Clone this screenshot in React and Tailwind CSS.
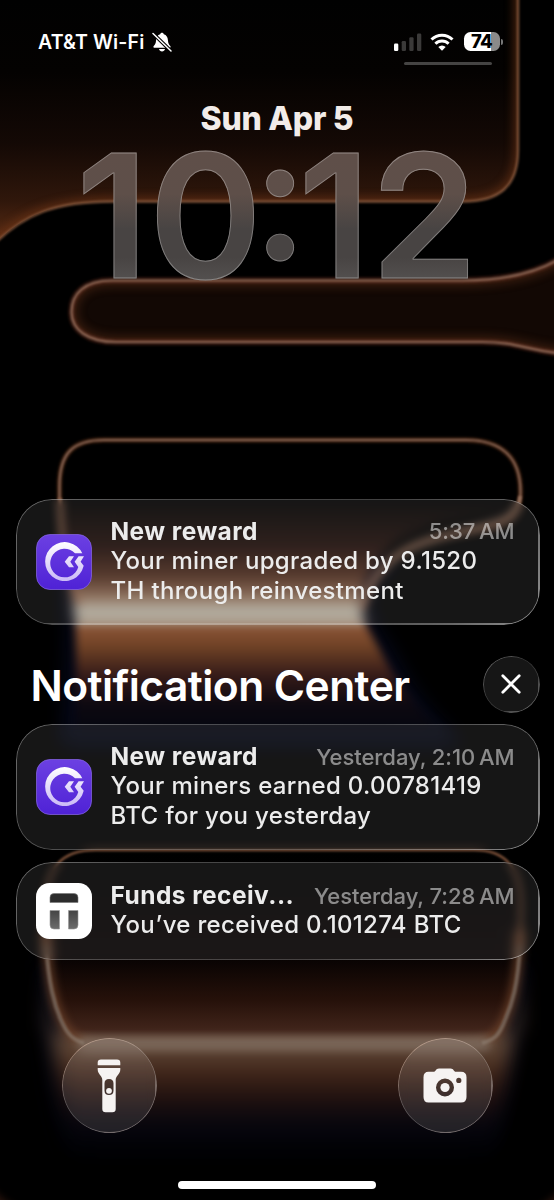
import React from "react";

const EDGE =
  "M518 -10 V150 C518 186 500 201.500 462 201.500 H112 C55 201.500 24 214 -8 246";
const CAPSULE =
  "M564 256 C540 272 506 280.500 462 280.500 H112 C84 280.500 71.500 294 71.500 312 C71.500 330 88 342 116 342 H482 C518 342 524 350 564 354";
const LOOP =
  "M59.500 500 V486 C59.500 452 74 440 104 440 H466 C502 440 520.500 458 520.500 492 C520.500 540 470 520 410 548 C378 564 368 590 362 610";
const BASE =
  "M45 912 C45 866 62 850 96 850 H474 C506 850 521 868 521 906 C521 950 517 985 507 1012 C499 1034 488 1043 464 1043 H102 C78 1043 66 1034 59 1012 C49 985 45 950 45 912 Z";

function Blur({ id, amount }) {
  return (
    <filter id={id} filterUnits="userSpaceOnUse" colorInterpolationFilters="sRGB" x="-60" y="-60" width="680" height="1320">
      <feGaussianBlur stdDeviation={amount} />
    </filter>
  );
}

function Wallpaper() {
  return (
    <svg className="absolute inset-0 size-full" viewBox="0 0 554 1200" aria-hidden="true">
      <defs>
        <Blur id="b2" amount="0.9" />
        <Blur id="b5" amount="4" />
        <Blur id="b9" amount="9" />
        <linearGradient id="top" gradientUnits="userSpaceOnUse" x1="0" y1="0" x2="0" y2="240">
          <stop offset="0" stopColor="#010101" />
          <stop offset="0.3" stopColor="#040201" />
          <stop offset="0.6" stopColor="#140905" />
          <stop offset="0.84" stopColor="#30170b" />
          <stop offset="1" stopColor="#5a2c14" />
        </linearGradient>
        <linearGradient id="flare" gradientUnits="userSpaceOnUse" x1="0" y1="500" x2="0" y2="735">
          <stop offset="0" stopColor="#000" />
          <stop offset="0.2" stopColor="#1c0c08" />
          <stop offset="0.33" stopColor="#4a2a1c" />
          <stop offset="0.42" stopColor="#8a6a54" />
          <stop offset="0.46" stopColor="#aca698" />
          <stop offset="0.515" stopColor="#aca698" />
          <stop offset="0.54" stopColor="#8a5436" />
          <stop offset="0.62" stopColor="#714326" />
          <stop offset="0.75" stopColor="#341a18" />
          <stop offset="0.87" stopColor="#0d0911" />
          <stop offset="1" stopColor="#04060f" />
        </linearGradient>
        <linearGradient id="pool" gradientUnits="userSpaceOnUse" x1="0" y1="850" x2="0" y2="1043">
          <stop offset="0" stopColor="#000" />
          <stop offset="0.55" stopColor="#060202" />
          <stop offset="0.78" stopColor="#26110a" />
          <stop offset="0.93" stopColor="#40241a" />
          <stop offset="1" stopColor="#5e493c" />
        </linearGradient>
        <linearGradient id="below" gradientUnits="userSpaceOnUse" x1="0" y1="1030" x2="0" y2="1165">
          <stop offset="0" stopColor="#62493a" />
          <stop offset="0.16" stopColor="#5a4232" />
          <stop offset="0.3" stopColor="#42271a" />
          <stop offset="0.5" stopColor="#21110f" />
          <stop offset="0.68" stopColor="#09070f" />
          <stop offset="0.85" stopColor="#020309" stopOpacity="0.6" />
          <stop offset="1" stopColor="#000" stopOpacity="0" />
        </linearGradient>
        <linearGradient id="navy" gradientUnits="userSpaceOnUse" x1="0" y1="960" x2="0" y2="1165">
          <stop offset="0" stopColor="#080d26" stopOpacity="0.45" />
          <stop offset="0.6" stopColor="#080d26" stopOpacity="0.4" />
          <stop offset="1" stopColor="#080d26" stopOpacity="0" />
        </linearGradient>
        <clipPath id="topClip"><path d={EDGE + " V-10 Z"} /></clipPath>
        <clipPath id="capClip"><path d={CAPSULE + " Z"} /></clipPath>
      </defs>
      <rect width="554" height="1200" fill="#000" />

      <g clipPath="url(#topClip)">
        <rect x="-10" y="-10" width="540" height="260" fill="url(#top)" />
        <path d={EDGE} fill="none" stroke="#7a3a18" strokeWidth="10" opacity="0.5" filter="url(#b5)" />
      </g>
      <path d={EDGE} fill="none" stroke="#7e5238" strokeWidth="2.400" filter="url(#b2)" />

      <path d={CAPSULE} fill="#120804" />
      <g clipPath="url(#capClip)">
        <path d={CAPSULE} fill="none" stroke="#5a2f18" strokeWidth="14" opacity="0.45" filter="url(#b5)" />
      </g>
      <path d={CAPSULE} fill="none" stroke="#5c2a1c" strokeWidth="7" opacity="0.45" filter="url(#b2)" />
      <path d={CAPSULE} fill="none" stroke="#916a58" strokeWidth="2.200" filter="url(#b2)" />

      <path
        d="M66 560 C64 580 66 590 66 620 C66 660 62 700 62 745 H462 C442 720 418 700 400 662 C385 634 376 628 366 605 C372 590 380 570 400 560 Z"
        fill="#0a1030"
        opacity="0.5"
        filter="url(#b9)"
      />
      <path
        d="M60 500 C62 550 72 585 75 620 C77 650 76 700 74 735 H448 C425 715 400 690 380 650 C368 628 360 618 362 602 C368 560 392 535 440 522 C490 512 518 512 520 500 Z"
        fill="url(#flare)"
        filter="url(#b5)"
      />
      <path d={LOOP} fill="none" stroke="#5c3018" strokeWidth="6" opacity="0.5" filter="url(#b2)" />
      <path d={LOOP} fill="none" stroke="#8d6856" strokeWidth="2.200" filter="url(#b2)" />
      <path d="M410 548 C378 564 368 590 362 610 M520 496 C518 530 470 522 410 548" fill="none" stroke="#a07a64" strokeWidth="4" opacity="0.7" filter="url(#b2)" />
      <path d="M60 498 C61 545 66 575 80 604" fill="none" stroke="#8d6048" strokeWidth="4" filter="url(#b2)" />

      <path d="M40 960 C42 1020 46 1080 62 1165 H498 C512 1080 522 1020 528 960 Z" fill="url(#navy)" filter="url(#b9)" />
      <path d="M46 960 C48 1010 54 1080 78 1165 H488 C508 1080 519 1010 521 960 V1030 H46 Z" fill="url(#below)" filter="url(#b9)" />
      <path d={BASE} fill="url(#pool)" />
      <path d="M46 930 C47 970 52 1000 61 1020 C68 1036 78 1043 100 1043 H466 C488 1043 499 1036 505 1020 C514 1000 519 970 520 930" fill="none" stroke="#7a4a2e" strokeWidth="9" opacity="0.7" filter="url(#b5)" />
      <path d="M84 1044 H484" stroke="#80746a" strokeWidth="14" strokeLinecap="round" opacity="0.7" filter="url(#b5)" />
      <path d="M46 945 C49 985 54 1004 61 1020 C68 1036 74 1040 84 1043" fill="none" stroke="#8f8073" strokeWidth="4" opacity="0.6" filter="url(#b2)" />
      <path d="M482 1043 C494 1040 499 1036 505 1020 C512 1004 518 985 520 945" fill="none" stroke="#8f8073" strokeWidth="4" opacity="0.6" filter="url(#b2)" />
      <path d="M46 945 C45 930 45 920 45 912 C45 866 62 850 96 850 H474 C506 850 521 868 521 906 C521 925 520 935 520 945" fill="none" stroke="#7c5038" strokeWidth="2.500" filter="url(#b2)" />
      <path d="M-12 1186 C0 1198 10 1206 24 1212 H-12 Z M566 1186 C554 1198 544 1206 530 1212 H566 Z" fill="#4a2416" opacity="0.6" filter="url(#b5)" />
    </svg>
  );
}

function Rim({ className }) {
  return (
    <div
      className={
        "pointer-events-none absolute inset-0 p-[1.3px] [mask:linear-gradient(#fff_0_0)_content-box_exclude,linear-gradient(#fff_0_0)] " +
        className
      }
    />
  );
}

function MinerIcon({ id }) {
  return (
    <svg className="size-14 shrink-0" viewBox="0 0 56 56" aria-hidden="true">
      <defs>
        <linearGradient id={id + "bg"} x1="0" y1="0" x2="0" y2="1">
          <stop offset="0" stopColor="#6c40e2" />
          <stop offset="1" stopColor="#4f22d6" />
        </linearGradient>
        <linearGradient id={id + "fg"} gradientUnits="userSpaceOnUse" x1="0" y1="8" x2="0" y2="48">
          <stop offset="0" stopColor="#fff" />
          <stop offset="1" stopColor="#c9b8f6" />
        </linearGradient>
      </defs>
      <rect x="0.500" y="0.500" width="55" height="55" rx="13.500" fill={`url(#${id}bg)`} stroke="#8a68ea" strokeOpacity="0.7" />
      <path
        d="M46.300 19.300 A19.500 19.500 0 1 0 46 36.500 L47.700 31.800 L44.600 27.700 L48 22.300 H42.600 L38.600 27.700 L42.300 33 A14.300 14.300 0 1 1 39 19.300 Z"
        fill={`url(#${id}fg)`}
      />
      <path d="M33 22.300 H38 L34.300 27.700 L38 33.300 H33 L28.700 27.700 Z" fill={`url(#${id}fg)`} />
    </svg>
  );
}

function FundsIcon() {
  return (
    <svg className="size-14 shrink-0" viewBox="0 0 56 56" aria-hidden="true">
      <defs>
        <linearGradient id="leg" x1="0" y1="0" x2="0" y2="1">
          <stop offset="0" stopColor="#444" />
          <stop offset="1" stopColor="#6c6c6c" />
        </linearGradient>
      </defs>
      <rect width="56" height="56" rx="13.500" fill="#fff" />
      <path d="M18 10.500 H38 Q42 10.500 42 14.500 V19.500 H14 V14.500 Q14 10.500 18 10.500 Z" fill="#2c2c2c" stroke="#777" strokeWidth="0.600" />
      <path d="M14 27.500 H23.500 V46 H18 Q14 46 14 42 Z" fill="url(#leg)" stroke="#999" strokeWidth="0.600" />
      <path d="M32.500 27.500 H42 V42 Q42 46 38 46 H32.500 Z" fill="url(#leg)" stroke="#999" strokeWidth="0.600" />
    </svg>
  );
}

function Card({ icon, title, time, children, className }) {
  return (
    <article
      className={
        "relative flex items-center rounded-[36px] bg-white/[0.085] pr-[25px] pl-[20.500px] backdrop-blur-[4px] " + className
      }
    >
      <Rim className="rounded-[36px] bg-[linear-gradient(125deg,#ffffff60_0%,#ffffff38_25%,#ffffff30_60%,#ffffff58_85%,#ffffff88_100%)]" />
      {icon}
      <div className="ml-[18.500px] min-w-0 flex-1 pb-[2px]">
        <div className="flex h-[30px] items-center justify-between">
          <h3 className="text-[24.500px] leading-[30px] font-bold tracking-[0.45px] whitespace-nowrap text-[#ececec]">{title}</h3>
          <time className="pt-px text-[22px] leading-[30px] font-medium tracking-[-0.06px] whitespace-nowrap text-white/50">{time}</time>
        </div>
        <p className="text-[24px] leading-[29.600px] font-medium tracking-[0.33px] whitespace-nowrap text-[#ececec]">{children}</p>
      </div>
    </article>
  );
}

function StatusBar() {
  return (
    <header className="flex h-[68px] items-start justify-between pt-[29.500px] pr-[51.500px] pl-[38px]">
      <div className="flex items-center gap-[8px]">
        <span className="text-[19.500px] leading-6 font-semibold tracking-[0.15px] whitespace-nowrap">AT&amp;T Wi-Fi</span>
        <svg className="size-5" viewBox="0 0 20 20" aria-hidden="true">
          <path d="M10 0.800 C10.900 0.800 11.600 1.400 11.800 2.200 C14.500 3 15.700 5.200 15.900 8 C16.100 11.500 17 12.500 18.300 14 C18.900 14.800 18.500 15.800 17.400 15.800 H2.600 C1.500 15.800 1.100 14.800 1.700 14 C3 12.500 3.900 11.500 4.100 8 C4.300 5.200 5.500 3 8.200 2.200 C8.400 1.400 9.100 0.800 10 0.800 Z" fill="#fff" />
          <path d="M7 17 H13 C12.700 18.500 11.500 19.400 10 19.400 C8.500 19.400 7.300 18.500 7 17 Z" fill="#fff" />
          <path d="M0.500 1 L19.500 19.500" stroke="#030202" strokeWidth="3.600" />
          <path d="M1 1.500 L19 19" stroke="#fff" strokeWidth="1.500" strokeLinecap="round" />
        </svg>
      </div>
      <div className="flex flex-col items-center">
        <div className="flex h-6 items-center">
          <svg className="h-[18px] w-7" viewBox="0 0 28 18" aria-hidden="true">
            <rect x="0" y="10.500" width="4.300" height="7.500" rx="1.200" fill="#fff" />
            <rect x="7.700" y="8" width="4.300" height="10" rx="1.200" fill="#3b3a39" />
            <rect x="15.300" y="4.300" width="4.300" height="13.700" rx="1.200" fill="#3b3a39" />
            <rect x="23" y="0.500" width="4.300" height="17.500" rx="1.200" fill="#3b3a39" />
          </svg>
          <svg className="ml-[8.500px] h-[18px] w-6" viewBox="0 0 24 18" fill="none" stroke="#fff" aria-hidden="true">
            <path d="M1.500 6.500 A15 15 0 0 1 22.500 6.500" strokeWidth="3" />
            <path d="M5.400 10.700 A9.400 9.400 0 0 1 18.600 10.700" strokeWidth="3" />
            <path d="M8.300 13.900 A5.300 5.300 0 0 1 15.700 13.900 L12 17.700 Z" fill="#fff" stroke="none" />
          </svg>
          <div className="ml-[9.500px] flex h-[19.500px] w-[36px] items-center justify-center rounded-[6.500px] bg-[linear-gradient(90deg,#fff_0_74%,#8b8a89_74%)]">
            <span className="text-[18.500px] leading-none font-extrabold tracking-[-0.7px] text-black">74</span>
          </div>
          <div className="ml-[1px] h-[6px] w-[2px] rounded-r-full bg-[#777]" />
        </div>
        <div className="mt-[8.500px] h-[3px] w-[88px] rounded-full bg-[#454443]" />
      </div>
    </header>
  );
}

function RoundButton({ children, label }) {
  return (
    <button aria-label={label} className="relative flex size-[95px] items-center justify-center rounded-full bg-white/[0.11] backdrop-blur-[6px]">
      <Rim className="rounded-full bg-[linear-gradient(150deg,#e0b8a099_0%,#ffffff38_45%,#ffffff38_60%,#f0d8d088_100%)]" />
      {children}
    </button>
  );
}

export default function App() {
  return (
    <main className="relative h-[1200px] w-[554px] overflow-hidden bg-black font-[Inter,sans-serif] text-white">
      <Wallpaper />
      <div className="relative flex h-full flex-col">
        <StatusBar />
        <h1 className="mt-[31px] text-center text-[32px] leading-[40px] font-extrabold tracking-[-0.25px] text-[#f2ece9]">Sun Apr 5</h1>
        <div className="mt-[6px] flex h-[140px] items-center justify-center">
          <span className="bg-[linear-gradient(180deg,#5f4f49_5%,#5e4f49_35%,#484443_60%,#484443_80%,#545150_98%)] bg-clip-text text-[172px] leading-[140px] font-semibold whitespace-nowrap text-transparent [-webkit-text-stroke:0.9px_#ffffff50]">
            1<span className="tracking-[-9.5px] [font-feature-settings:'case']">0:</span>12
          </span>
        </div>
        <section className="mt-[208px] pt-[5.500px] pr-[14.500px] pl-[15.500px]">
          <Card className="h-[126px]" icon={<MinerIcon id="a" />} title="New reward" time={<>5:37&#8201;AM</>}>
            Your miner upgraded by 9.1520
            <br />
            TH through reinvestment
          </Card>
          <div className="mt-[31px] flex h-[57px] items-center justify-between pl-[15px]">
            <h2 className="pt-[3px] text-[42.500px] leading-[56px] font-semibold tracking-[-0.55px] whitespace-nowrap">Notification Center</h2>
            <button aria-label="Close" className="relative flex size-[57px] items-center justify-center rounded-full bg-white/[0.085]">
              <Rim className="rounded-full bg-[linear-gradient(135deg,#ffffff70,#ffffff24_40%,#ffffff24_60%,#ffffff70)]" />
              <svg className="size-5" viewBox="0 0 20 20" stroke="#fff" strokeWidth="2.800" strokeLinecap="round" aria-hidden="true">
                <path d="M1.800 1.800 L18.200 18.200 M18.200 1.800 L1.800 18.200" />
              </svg>
            </button>
          </div>
          <Card className="mt-[11.500px] h-[126px]" icon={<MinerIcon id="b" />} title="New reward" time={<>Yesterday, 2:10&#8201;AM</>}>
            Your miners earned 0.00781419
            <br />
            BTC for you yesterday
          </Card>
          <Card className="mt-[12px] h-[98px]" icon={<FundsIcon />} title="Funds receiv..." time={<>Yesterday, 7:28&#8201;AM</>}>
            You’ve received 0.101274 BTC
          </Card>
        </section>
        <footer className="mt-[78px] flex items-center justify-between px-[61.500px]">
          <RoundButton label="Flashlight">
            <svg className="h-[54px] w-6" viewBox="0 0 24 54" aria-hidden="true">
              <path d="M4 0.500 H20 Q23.300 0.500 23.300 3.800 V6.300 H0.700 V3.800 Q0.700 0.500 4 0.500 Z" fill="#f6f3f2" />
              <path fillRule="evenodd" d="M0.700 9 H23.300 V10.500 C23.300 15.500 18.700 16.500 18.700 21 V50 Q18.700 53.300 15.400 53.300 H8.600 Q5.300 53.300 5.300 50 V21 C5.300 16.500 0.700 15.500 0.700 10.500 Z M12 20 Q7.500 20 7.500 24.500 V31.500 Q7.500 36 12 36 Q16.500 36 16.500 31.500 V24.500 Q16.500 20 12 20 Z" fill="#f6f3f2" />
              <circle cx="12" cy="31.800" r="2.900" fill="#f6f3f2" />
            </svg>
          </RoundButton>
          <RoundButton label="Camera">
            <svg className="h-[35px] w-[44px]" viewBox="0 0 44 35" aria-hidden="true">
              <path fillRule="evenodd" d="M5.500 3.800 H10.500 C13 3.800 12.500 0.500 16 0.500 H27.500 C31 0.500 30.500 3.800 33 3.800 H38 Q43.500 3.800 43.500 9.300 V29 Q43.500 34.500 38 34.500 H5.500 Q0.500 34.500 0.500 29 V9.300 Q0.500 3.800 5.500 3.800 Z M22 10.500 A9 9 0 1 0 22 28.500 A9 9 0 1 0 22 10.500 Z M35.800 9.800 A2.600 2.600 0 1 0 35.800 15 A2.600 2.600 0 1 0 35.800 9.800 Z" fill="#f6f3f2" />
              <circle cx="22" cy="19.500" r="4.600" fill="#f6f3f2" />
            </svg>
          </RoundButton>
        </footer>
        <div className="mx-auto mt-auto mb-[11.500px] h-2 w-[198px] rounded-full bg-white" />
      </div>
    </main>
  );
}
